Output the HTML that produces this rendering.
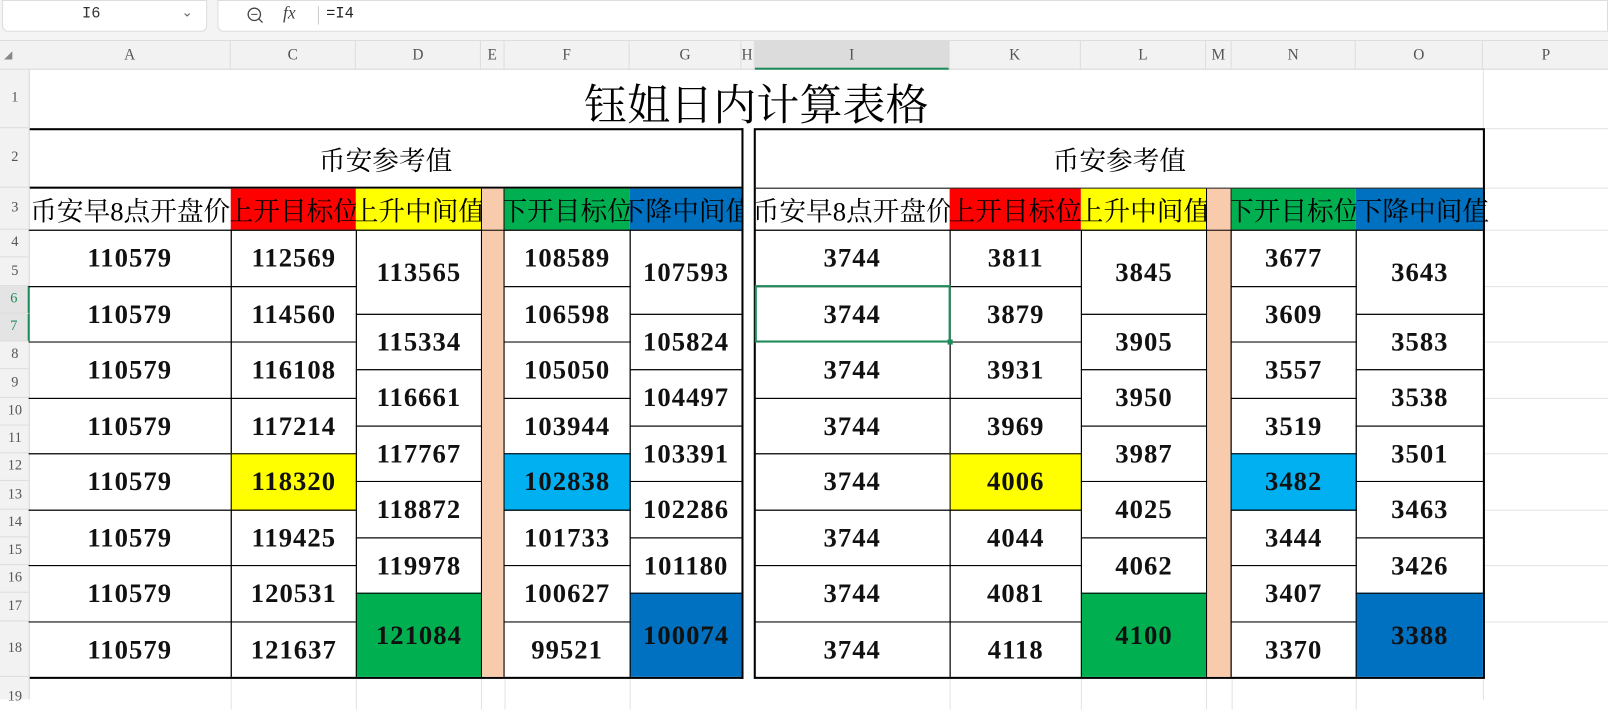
<!DOCTYPE html>
<html><head><meta charset="utf-8"><style>
*{margin:0;padding:0;box-sizing:border-box}
body{width:1608px;height:699px;overflow:hidden;background:#fff;position:relative;font-family:"Liberation Serif","Noto Serif CJK SC",serif}
#w{position:absolute;left:0;top:0;width:1568px;height:682px;transform:scale(1.02551);transform-origin:0 0}
.a{position:absolute}
.c{position:absolute;display:flex;align-items:center;justify-content:center;overflow:hidden;white-space:nowrap;border:1px solid #000;font-size:26px;font-weight:bold;letter-spacing:1px;color:#111}
.h{position:absolute;display:flex;align-items:center;justify-content:center;overflow:hidden;white-space:nowrap;font-size:26px;color:#000}
.ch{position:absolute;top:40px;height:28px;display:flex;align-items:center;justify-content:center;font-size:15px;color:#555;border-right:1px solid #ddd}
.rh{position:absolute;left:0;width:29px;display:flex;align-items:center;justify-content:center;font-size:14px;color:#555;border-bottom:1px solid #ddd}
.g{position:absolute;background:#e3e3e3}
</style></head><body><div id="w">
<div class="a" style="left:0;top:0;width:1568px;height:40px;background:#f4f4f4;border-bottom:1px solid #ddd"></div>
<div class="a" style="left:2px;top:0;width:200px;height:31px;background:#fff;border:1px solid #ddd;border-radius:0 0 6px 6px"></div>
<div class="a" style="left:80px;top:5px;font-size:15px;color:#333;font-family:'Liberation Mono',monospace">I6</div>
<div class="a" style="left:177px;top:4px;font-size:13px;color:#666">&#8964;</div>
<div class="a" style="left:212px;top:0;width:1356px;height:31px;background:#fff;border:1px solid #ddd;border-radius:0 0 0 6px"></div>
<svg class="a" style="left:240px;top:6px" width="18" height="18"><circle cx="8" cy="8" r="6" fill="none" stroke="#444" stroke-width="1.3"/><line x1="5" y1="8" x2="11" y2="8" stroke="#444"/><line x1="12" y1="12" x2="16" y2="16" stroke="#444" stroke-width="1.3"/></svg>
<div class="a" style="left:276px;top:3px;font-size:17px;font-style:italic;color:#444">fx</div>
<div class="a" style="left:310px;top:6px;width:1px;height:18px;background:#ccc"></div>
<div class="a" style="left:318px;top:5px;font-size:15px;color:#222;font-family:'Liberation Mono',monospace">=I4</div>
<div class="a" style="left:0;top:40px;width:1568px;height:28px;background:#f2f2f2;border-bottom:1px solid #d8d8d8"></div>
<div class="a" style="left:0;top:68px;width:29px;height:614px;background:#f2f2f2;border-right:1px solid #d8d8d8"></div>
<div class="a" style="left:736px;top:40px;width:190px;height:28px;background:#dcdcdc;border-bottom:2px solid #1e8c5a"></div>
<div class="ch" style="left:29px;width:196px">A</div>
<div class="ch" style="left:225px;width:122px">C</div>
<div class="ch" style="left:347px;width:122px">D</div>
<div class="ch" style="left:469px;width:23px">E</div>
<div class="ch" style="left:492px;width:122px">F</div>
<div class="ch" style="left:614px;width:109px">G</div>
<div class="ch" style="left:723px;width:13px;justify-content:flex-start">H</div>
<div class="ch" style="left:736px;width:190px">I</div>
<div class="ch" style="left:926px;width:128px">K</div>
<div class="ch" style="left:1054px;width:122px">L</div>
<div class="ch" style="left:1176px;width:25px">M</div>
<div class="ch" style="left:1201px;width:121px">N</div>
<div class="ch" style="left:1322px;width:124px">O</div>
<div class="ch" style="left:1446px;width:124px">P</div>
<div class="a" style="left:4px;top:50px;width:0;height:0;border-left:8px solid transparent;border-bottom:8px solid #888"></div>
<div class="rh" style="top:68px;height:57px">1</div>
<div class="rh" style="top:125px;height:58px">2</div>
<div class="rh" style="top:183px;height:41px">3</div>
<div class="rh" style="top:224px;height:27px">4</div>
<div class="rh" style="top:251px;height:28px">5</div>
<div class="rh" style="top:279px;height:27px;background:#e4e4e4;color:#1e8c5a;border-right:2px solid #1e8c5a">6</div>
<div class="rh" style="top:306px;height:27px;background:#e4e4e4;color:#1e8c5a;border-right:2px solid #1e8c5a">7</div>
<div class="rh" style="top:333px;height:27px">8</div>
<div class="rh" style="top:360px;height:28px">9</div>
<div class="rh" style="top:388px;height:27px">10</div>
<div class="rh" style="top:415px;height:27px">11</div>
<div class="rh" style="top:442px;height:27px">12</div>
<div class="rh" style="top:469px;height:28px">13</div>
<div class="rh" style="top:497px;height:27px">14</div>
<div class="rh" style="top:524px;height:27px">15</div>
<div class="rh" style="top:551px;height:27px">16</div>
<div class="rh" style="top:578px;height:28px">17</div>
<div class="rh" style="top:606px;height:54px">18</div>
<div class="rh" style="top:660px;height:39px;border-bottom:none">19</div>
<div class="g" style="left:1446px;top:68px;width:1px;height:614px"></div>
<div class="g" style="left:1570px;top:68px;width:1px;height:614px"></div>
<div class="g" style="left:1446px;top:125px;width:122px;height:1px"></div>
<div class="g" style="left:1446px;top:183px;width:122px;height:1px"></div>
<div class="g" style="left:1446px;top:224px;width:122px;height:1px"></div>
<div class="g" style="left:1446px;top:279px;width:122px;height:1px"></div>
<div class="g" style="left:1446px;top:333px;width:122px;height:1px"></div>
<div class="g" style="left:1446px;top:388px;width:122px;height:1px"></div>
<div class="g" style="left:1446px;top:442px;width:122px;height:1px"></div>
<div class="g" style="left:1446px;top:497px;width:122px;height:1px"></div>
<div class="g" style="left:1446px;top:551px;width:122px;height:1px"></div>
<div class="g" style="left:1446px;top:606px;width:122px;height:1px"></div>
<div class="g" style="left:225px;top:662px;width:1px;height:30px"></div>
<div class="g" style="left:347px;top:662px;width:1px;height:30px"></div>
<div class="g" style="left:469px;top:662px;width:1px;height:30px"></div>
<div class="g" style="left:492px;top:662px;width:1px;height:30px"></div>
<div class="g" style="left:614px;top:662px;width:1px;height:30px"></div>
<div class="g" style="left:926px;top:662px;width:1px;height:30px"></div>
<div class="g" style="left:1054px;top:662px;width:1px;height:30px"></div>
<div class="g" style="left:1176px;top:662px;width:1px;height:30px"></div>
<div class="g" style="left:1201px;top:662px;width:1px;height:30px"></div>
<div class="g" style="left:1322px;top:662px;width:1px;height:30px"></div>
<div class="h" style="left:29px;top:68px;width:1417px;height:57px;font-size:42px;padding-top:6px">钰姐日内计算表格</div>

<div class="a" style="left:29px;top:125px;width:696px;height:537px;border:2px solid #000;border-left:none"></div>
<div class="h" style="left:29px;top:127px;width:694px;height:56px">币安参考值</div>
<div class="a" style="left:29px;top:182px;width:694px;height:2px;background:#000"></div>
<div class="h" style="left:29px;top:184px;width:196px;height:40px">币安早8点开盘价</div>
<div class="h" style="left:225px;top:184px;width:122px;height:40px;background:#f00">上开目标位</div>
<div class="h" style="left:347px;top:184px;width:122px;height:40px;background:#ff0">上升中间值</div>
<div class="a" style="left:469px;top:184px;width:23px;height:476px;background:#f8cbad;border-left:1px solid #000;border-right:1px solid #000"></div>
<div class="h" style="left:492px;top:184px;width:122px;height:40px;background:#00b050">下开目标位</div>
<div class="h" style="left:614px;top:184px;width:109px;height:40px;background:#0070c0">下降中间值</div>
<div class="a" style="left:29px;top:224px;width:694px;height:1px;background:#000"></div>

<div class="c" style="left:28px;top:224px;width:198px;height:56px;border-left:none">110579</div>
<div class="c" style="left:28px;top:279px;width:198px;height:55px;border-left:none">110579</div>
<div class="c" style="left:28px;top:333px;width:198px;height:56px;border-left:none">110579</div>
<div class="c" style="left:28px;top:388px;width:198px;height:55px;border-left:none">110579</div>
<div class="c" style="left:28px;top:442px;width:198px;height:56px;border-left:none">110579</div>
<div class="c" style="left:28px;top:497px;width:198px;height:55px;border-left:none">110579</div>
<div class="c" style="left:28px;top:551px;width:198px;height:56px;border-left:none">110579</div>
<div class="c" style="left:28px;top:606px;width:198px;height:54px;border-left:none;border-bottom:none">110579</div>

<div class="c" style="left:225px;top:224px;width:123px;height:56px">112569</div>
<div class="c" style="left:225px;top:279px;width:123px;height:55px">114560</div>
<div class="c" style="left:225px;top:333px;width:123px;height:56px">116108</div>
<div class="c" style="left:225px;top:388px;width:123px;height:55px">117214</div>
<div class="c" style="left:225px;top:442px;width:123px;height:56px;background:#ff0">118320</div>
<div class="c" style="left:225px;top:497px;width:123px;height:55px">119425</div>
<div class="c" style="left:225px;top:551px;width:123px;height:56px">120531</div>
<div class="c" style="left:225px;top:606px;width:123px;height:54px;border-bottom:none">121637</div>

<div class="c" style="left:347px;top:224px;width:123px;height:83px">113565</div>
<div class="c" style="left:347px;top:306px;width:123px;height:55px">115334</div>
<div class="c" style="left:347px;top:360px;width:123px;height:56px">116661</div>
<div class="c" style="left:347px;top:415px;width:123px;height:55px">117767</div>
<div class="c" style="left:347px;top:469px;width:123px;height:56px">118872</div>
<div class="c" style="left:347px;top:524px;width:123px;height:55px">119978</div>
<div class="c" style="left:347px;top:578px;width:123px;height:82px;background:#00b050;border-bottom:none">121084</div>

<div class="c" style="left:491px;top:224px;width:124px;height:56px">108589</div>
<div class="c" style="left:491px;top:279px;width:124px;height:55px">106598</div>
<div class="c" style="left:491px;top:333px;width:124px;height:56px">105050</div>
<div class="c" style="left:491px;top:388px;width:124px;height:55px">103944</div>
<div class="c" style="left:491px;top:442px;width:124px;height:56px;background:#00b0f0">102838</div>
<div class="c" style="left:491px;top:497px;width:124px;height:55px">101733</div>
<div class="c" style="left:491px;top:551px;width:124px;height:56px">100627</div>
<div class="c" style="left:491px;top:606px;width:124px;height:54px;border-bottom:none">99521</div>

<div class="c" style="left:614px;top:224px;width:109px;height:83px;border-right:none">107593</div>
<div class="c" style="left:614px;top:306px;width:109px;height:55px;border-right:none">105824</div>
<div class="c" style="left:614px;top:360px;width:109px;height:56px;border-right:none">104497</div>
<div class="c" style="left:614px;top:415px;width:109px;height:55px;border-right:none">103391</div>
<div class="c" style="left:614px;top:469px;width:109px;height:56px;border-right:none">102286</div>
<div class="c" style="left:614px;top:524px;width:109px;height:55px;border-right:none">101180</div>
<div class="c" style="left:614px;top:578px;width:109px;height:82px;background:#0070c0;border-right:none;border-bottom:none">100074</div>

<div class="a" style="left:735px;top:125px;width:713px;height:537px;border:2px solid #000"></div>
<div class="h" style="left:737px;top:127px;width:709px;height:56px">币安参考值</div>
<div class="a" style="left:737px;top:183px;width:709px;height:1px;background:#000"></div>
<div class="h" style="left:737px;top:184px;width:189px;height:40px">币安早8点开盘价</div>
<div class="h" style="left:926px;top:184px;width:128px;height:40px;background:#f00">上开目标位</div>
<div class="h" style="left:1054px;top:184px;width:122px;height:40px;background:#ff0">上升中间值</div>
<div class="a" style="left:1176px;top:184px;width:25px;height:476px;background:#f8cbad;border-left:1px solid #000;border-right:1px solid #000"></div>
<div class="h" style="left:1201px;top:184px;width:121px;height:40px;background:#00b050">下开目标位</div>
<div class="a" style="left:1322px;top:184px;width:124px;height:40px;background:#0070c0"></div>
<div class="h" style="left:1322px;top:184px;width:140px;height:40px;justify-content:flex-start">下降中间值</div>
<div class="a" style="left:1446px;top:184px;width:2px;height:40px;background:#000"></div>
<div class="a" style="left:737px;top:224px;width:709px;height:1px;background:#000"></div>

<div class="c" style="left:736px;top:224px;width:191px;height:56px;border-left:none">3744</div>
<div class="c" style="left:736px;top:279px;width:191px;height:55px;border-left:none">3744</div>
<div class="c" style="left:736px;top:333px;width:191px;height:56px;border-left:none">3744</div>
<div class="c" style="left:736px;top:388px;width:191px;height:55px;border-left:none">3744</div>
<div class="c" style="left:736px;top:442px;width:191px;height:56px;border-left:none">3744</div>
<div class="c" style="left:736px;top:497px;width:191px;height:55px;border-left:none">3744</div>
<div class="c" style="left:736px;top:551px;width:191px;height:56px;border-left:none">3744</div>
<div class="c" style="left:736px;top:606px;width:191px;height:54px;border-left:none;border-bottom:none">3744</div>

<div class="c" style="left:926px;top:224px;width:129px;height:56px">3811</div>
<div class="c" style="left:926px;top:279px;width:129px;height:55px">3879</div>
<div class="c" style="left:926px;top:333px;width:129px;height:56px">3931</div>
<div class="c" style="left:926px;top:388px;width:129px;height:55px">3969</div>
<div class="c" style="left:926px;top:442px;width:129px;height:56px;background:#ff0">4006</div>
<div class="c" style="left:926px;top:497px;width:129px;height:55px">4044</div>
<div class="c" style="left:926px;top:551px;width:129px;height:56px">4081</div>
<div class="c" style="left:926px;top:606px;width:129px;height:54px;border-bottom:none">4118</div>

<div class="c" style="left:1054px;top:224px;width:123px;height:83px">3845</div>
<div class="c" style="left:1054px;top:306px;width:123px;height:55px">3905</div>
<div class="c" style="left:1054px;top:360px;width:123px;height:56px">3950</div>
<div class="c" style="left:1054px;top:415px;width:123px;height:55px">3987</div>
<div class="c" style="left:1054px;top:469px;width:123px;height:56px">4025</div>
<div class="c" style="left:1054px;top:524px;width:123px;height:55px">4062</div>
<div class="c" style="left:1054px;top:578px;width:123px;height:82px;background:#00b050;border-bottom:none">4100</div>

<div class="c" style="left:1200px;top:224px;width:123px;height:56px">3677</div>
<div class="c" style="left:1200px;top:279px;width:123px;height:55px">3609</div>
<div class="c" style="left:1200px;top:333px;width:123px;height:56px">3557</div>
<div class="c" style="left:1200px;top:388px;width:123px;height:55px">3519</div>
<div class="c" style="left:1200px;top:442px;width:123px;height:56px;background:#00b0f0">3482</div>
<div class="c" style="left:1200px;top:497px;width:123px;height:55px">3444</div>
<div class="c" style="left:1200px;top:551px;width:123px;height:56px">3407</div>
<div class="c" style="left:1200px;top:606px;width:123px;height:54px;border-bottom:none">3370</div>

<div class="c" style="left:1322px;top:224px;width:124px;height:83px;border-right:none">3643</div>
<div class="c" style="left:1322px;top:306px;width:124px;height:55px;border-right:none">3583</div>
<div class="c" style="left:1322px;top:360px;width:124px;height:56px;border-right:none">3538</div>
<div class="c" style="left:1322px;top:415px;width:124px;height:55px;border-right:none">3501</div>
<div class="c" style="left:1322px;top:469px;width:124px;height:56px;border-right:none">3463</div>
<div class="c" style="left:1322px;top:524px;width:124px;height:55px;border-right:none">3426</div>
<div class="c" style="left:1322px;top:578px;width:124px;height:82px;background:#0070c0;border-right:none;border-bottom:none">3388</div>

<div class="a" style="left:736px;top:278px;width:191px;height:56px;border:2px solid #1e8c5a"></div>
<div class="a" style="left:924px;top:331px;width:5px;height:5px;background:#1e8c5a"></div>
</div></body></html>
